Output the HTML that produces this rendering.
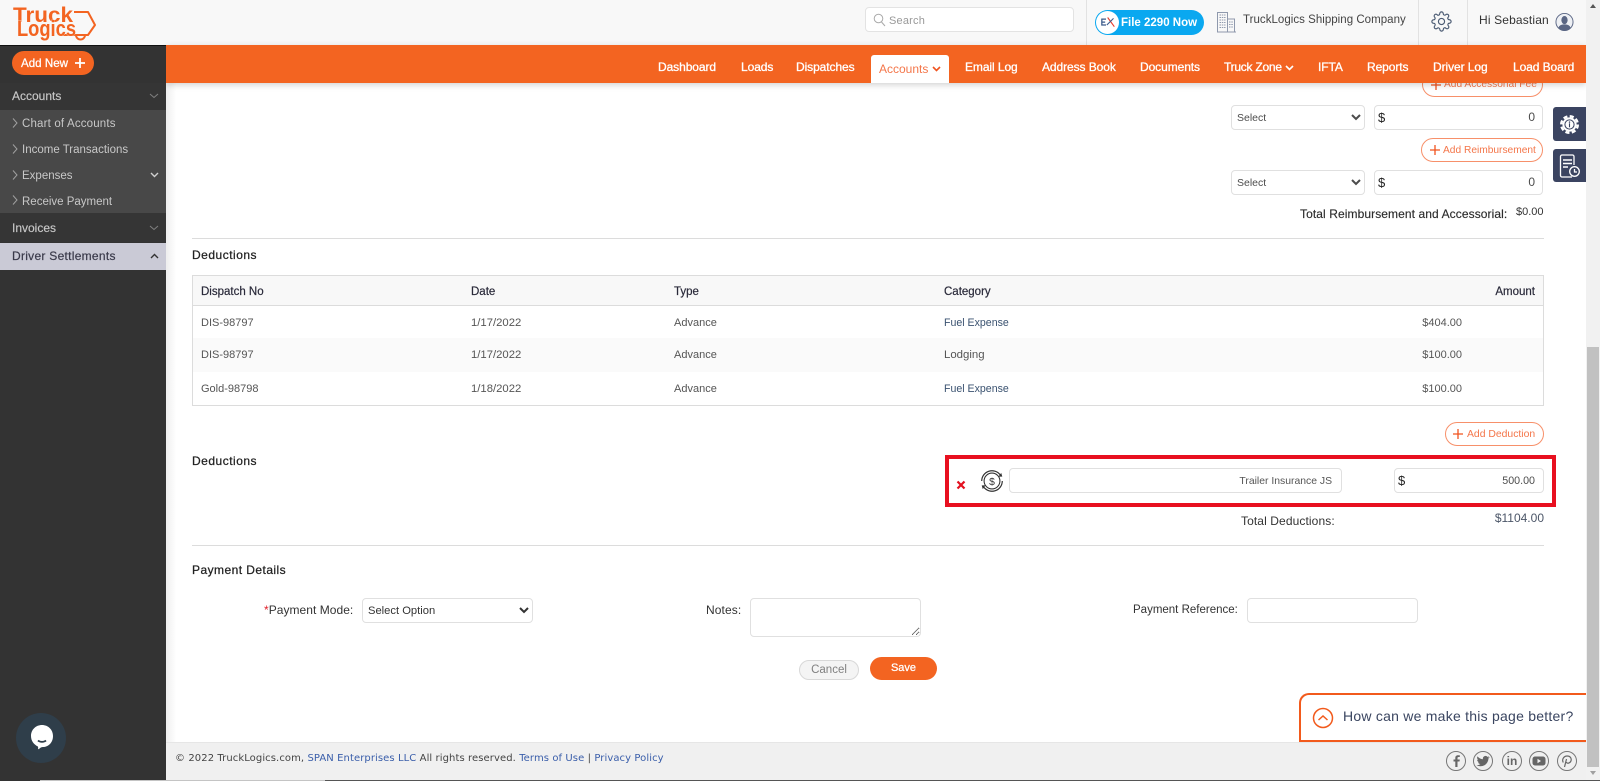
<!DOCTYPE html>
<html lang="en"><head><meta charset="utf-8"><title>TruckLogics</title>
<style>
html,body{margin:0;padding:0;width:1600px;height:781px;overflow:hidden;background:#fff}
body{position:relative;font:12px "Liberation Sans",sans-serif;color:#4c4c4c}
div,span,a,select,input,textarea,svg,button{position:absolute;box-sizing:border-box}
.t{white-space:nowrap;line-height:14px;height:14px}
.nav{color:#fff;-webkit-text-stroke:.3px #fff;top:60px;letter-spacing:-.08px}
.side{color:#c8c8c8;left:22px;font-size:11.5px}
.sh{color:#c8c8c8;left:12px;-webkit-text-stroke:.15px #c8c8c8}
.hd{color:#222;left:192px;-webkit-text-stroke:.25px #222;letter-spacing:.5px}
.th{color:#2a2a3a;top:285px;-webkit-text-stroke:.2px #2a2a3a;font-size:11.5px}
.td{color:#555;font-size:11px}
.fuel{color:#3a5270;font-size:10.6px}
.fld{background:#fff;border:1px solid #e0e0e0;border-radius:4px;font:12px "Liberation Sans",sans-serif;color:#4c4c4c;margin:0}
.sel{font-size:10.5px;padding-left:1px}
.pill{background:#fff;border:1px solid #f7906a;border-radius:13px}
.pt{color:#f4764a;font-size:10.2px}
.r{text-align:right}
a{color:#3a5eaa;text-decoration:none;position:static}
</style></head><body>

<!-- main shadows -->
<div style="left:166px;top:83px;width:10px;height:660px;background:linear-gradient(90deg,#eee,#fff)"></div>

<!-- right side form (top) -->
<div class="pill" style="left:1422px;top:72px;width:121px;height:25px"></div>
<div class="t pt" style="left:1444px;top:78px">Add Accessorial Fee</div>
<svg style="left:1431px;top:80px" width="10" height="10" viewBox="0 0 10 10"><path d="M5 0v10M0 5h10" stroke="#f0531f" stroke-width="1.300"/></svg>

<select class="fld sel" style="left:1231px;top:105px;width:134px;height:25px"><option>Select</option></select>
<div class="fld" style="left:1374px;top:105px;width:169px;height:25px"></div>
<div class="t" style="left:1378px;top:111px;color:#222;font-size:13px">$</div>
<div class="t r" style="right:65px;top:110px;">0</div>

<div class="pill" style="left:1421px;top:138px;width:122px;height:24px"></div>
<div class="t pt" style="left:1443px;top:144px">Add Reimbursement</div>
<svg style="left:1430px;top:145px" width="10" height="10" viewBox="0 0 10 10"><path d="M5 0v10M0 5h10" stroke="#f0531f" stroke-width="1.300"/></svg>

<select class="fld sel" style="left:1231px;top:170px;width:134px;height:25px"><option>Select</option></select>
<div class="fld" style="left:1374px;top:170px;width:169px;height:25px"></div>
<div class="t" style="left:1378px;top:176px;color:#222;font-size:13px">$</div>
<div class="t r" style="right:65px;top:175px;">0</div>

<div class="t" style="left:1300px;top:207px;color:#2c2c2c;letter-spacing:.09px;-webkit-text-stroke:.15px #2c2c2c">Total Reimbursement and Accessorial:</div>
<div class="t" style="left:1516px;top:205px;font-size:11px;color:#333">$0.00</div>

<div style="left:192px;top:238px;width:1352px;height:1px;background:#dcdcdc"></div>
<div class="t hd" style="top:248px">Deductions</div>

<!-- table -->
<div style="left:192px;top:275px;width:1352px;height:131px;border:1px solid #dcdcdc;background:#fff"></div>
<div style="left:193px;top:276px;width:1350px;height:30px;background:#f8f8f8;border-bottom:1px solid #dcdcdc"></div>
<div style="left:193px;top:338px;width:1350px;height:34px;background:#fafafa"></div>
<div class="t th" style="left:201px">Dispatch No</div>
<div class="t th" style="left:471px">Date</div>
<div class="t th" style="left:674px">Type</div>
<div class="t th" style="left:944px">Category</div>
<div class="t th r" style="right:65px">Amount</div>

<div class="t td" style="left:201px;top:316px">DIS-98797</div>
<div class="t td" style="left:471px;top:316px;font-size:11.3px">1/17/2022</div>
<div class="t td" style="left:674px;top:316px">Advance</div>
<div class="t td fuel" style="left:944px;top:316px">Fuel Expense</div>
<div class="t td r" style="right:138px;top:316px">$404.00</div>

<div class="t td" style="left:201px;top:348px">DIS-98797</div>
<div class="t td" style="left:471px;top:348px;font-size:11.3px">1/17/2022</div>
<div class="t td" style="left:674px;top:348px">Advance</div>
<div class="t td" style="left:944px;top:348px;font-size:11.4px">Lodging</div>
<div class="t td r" style="right:138px;top:348px">$100.00</div>

<div class="t td" style="left:201px;top:382px">Gold-98798</div>
<div class="t td" style="left:471px;top:382px;font-size:11.3px">1/18/2022</div>
<div class="t td" style="left:674px;top:382px">Advance</div>
<div class="t td fuel" style="left:944px;top:382px">Fuel Expense</div>
<div class="t td r" style="right:138px;top:382px">$100.00</div>

<div class="pill" style="left:1445px;top:422px;width:99px;height:24px"></div>
<div class="t pt" style="left:1467px;top:428px;font-size:10.4px">Add Deduction</div>
<svg style="left:1453px;top:429px" width="10" height="10" viewBox="0 0 10 10"><path d="M5 0v10M0 5h10" stroke="#f0531f" stroke-width="1.300"/></svg>

<div class="t hd" style="top:454px">Deductions</div>

<!-- highlighted row -->
<div style="left:945px;top:455px;width:611px;height:52px;border:4px solid #e81020"></div>
<svg style="left:956px;top:480px" width="10" height="10" viewBox="0 0 10 10"><path d="M1.500 1.500l7 7M8.500 1.500l-7 7" stroke="#e3101f" stroke-width="2.200" fill="none"/></svg>
<svg style="left:979px;top:468px" width="26" height="26" viewBox="0 0 24 24" fill="none" stroke="#333">
<circle cx="12" cy="12" r="7.300" stroke-width="1"/>
<path d="M2.500 12a9.500 9.500 0 0 1 17-5.800M21.500 12a9.500 9.500 0 0 1-17 5.800" stroke-width="1.100"/>
<path d="M18 8h3.500l-1-3.500zM6 16H2.500l1 3.500z" fill="#333" stroke="none"/>
<text x="12" y="15.500" font-size="9.500" text-anchor="middle" fill="#333" stroke="none" font-family="Liberation Sans">$</text></svg>
<div class="fld" style="left:1009px;top:468px;width:333px;height:25px;color:#555;text-align:right;line-height:25px;padding-right:9px;font-size:10.4px">Trailer Insurance JS</div>
<div class="fld" style="left:1394px;top:468px;width:150px;height:25px;text-align:right;line-height:24px;padding-right:8px;font-size:10.7px">500.00</div>
<div class="t" style="left:1398px;top:474px;color:#222;font-size:13px">$</div>

<div class="t" style="left:1241px;top:514px;color:#333;letter-spacing:.1px">Total Deductions:</div>
<div class="t r" style="right:56px;top:511px;color:#4c5668">$1104.00</div>

<div style="left:192px;top:545px;width:1352px;height:1px;background:#dcdcdc"></div>
<div class="t hd" style="top:563px;letter-spacing:.45px">Payment Details</div>

<!-- payment -->
<div class="t" style="left:264px;top:603px;color:#333;letter-spacing:.04px"><span style="position:static;color:#e0202a">*</span>Payment Mode:</div>
<select class="fld" style="left:362px;top:598px;width:171px;height:25px;padding-left:1px;color:#333;font-size:11.2px"><option>Select Option</option></select>
<div class="t" style="left:706px;top:603px;color:#333;letter-spacing:.1px">Notes:</div>
<textarea class="fld" style="left:750px;top:598px;width:171px;height:39px"></textarea>
<div class="t" style="left:1133px;top:603px;color:#333;font-size:11.5px">Payment Reference:</div>
<div class="fld" style="left:1247px;top:598px;width:171px;height:25px"></div>

<div style="left:799px;top:660px;width:60px;height:20px;border:1px solid #d8d8d8;border-radius:10px;background:#f4f4f4;color:#808080;text-align:center;line-height:19px;font-size:11.5px">Cancel</div>
<div style="left:870px;top:657px;width:67px;height:23px;background:#f36421;border-radius:12px;color:#fff;text-align:center;line-height:23px;font-size:11px;-webkit-text-stroke:.25px #fff">Save</div>

<!-- footer -->
<div style="left:166px;top:742px;width:1420px;height:39px;background:#f0f0f0;border-top:1px solid #e6e6e6"></div>
<div class="t" style="left:175px;top:752px;color:#444;font-family:'DejaVu Sans',sans-serif;font-size:10px;letter-spacing:.085px">© 2022 TruckLogics.com, <a>SPAN Enterprises LLC</a> All rights reserved. <a>Terms of Use</a> | <a>Privacy Policy</a></div>
<svg style="left:1445px;top:750px" width="134" height="22" viewBox="0 0 134 22" fill="none" stroke="#777">
<circle cx="11" cy="11" r="9.500"/><circle cx="38" cy="11" r="9.500"/><circle cx="67" cy="11" r="9.500"/><circle cx="94" cy="11" r="9.500"/><circle cx="122" cy="11" r="9.500"/>
<path d="M12.500 17v-5.500h2l.3-2h-2.300V8.200c0-.8.3-1.200 1.100-1.200h1.200V5.200h-1.800c-1.900 0-2.700 1.100-2.700 2.800v1.500H8.500v2h1.800V17z" fill="#666" stroke="none"/>
<path d="M44.500 7.300c-.5.200-1 .4-1.500.4.500-.3 1-.8 1.200-1.400-.5.300-1.100.5-1.700.6a2.600 2.600 0 0 0-4.500 2.400c-2.200-.1-4.200-1.200-5.500-2.900-.7 1.200-.4 2.700.8 3.500-.4 0-.8-.1-1.200-.3 0 1.300.9 2.400 2.100 2.600-.4.100-.8.100-1.200 0 .3 1.100 1.300 1.800 2.400 1.800-1.100.9-2.500 1.300-3.900 1.100 3.900 2.500 11.300 1.100 12-6.700.5-.3.900-.7 1.300-1.100z" fill="#666" stroke="none"/>
<text x="67" y="15" font-size="12" font-weight="700" text-anchor="middle" fill="#666" stroke="none" font-family="Liberation Sans">in</text>
<rect x="87.500" y="6.500" width="13" height="9" rx="2.500" fill="#666" stroke="none"/><path d="M92.500 8.800v4.400l3.500-2.200z" fill="#f0f0f0" stroke="none"/>
<path d="M119.500 17l2-8M118.300 12.500c-1.700-2.800.300-6.500 3.900-6.500 3 0 4.400 2.200 3.900 4.500-.5 2.300-3.400 3.700-4.900 1.800" stroke="#666" stroke-width="1.200"/>
</svg>

<!-- feedback -->
<div style="left:1299px;top:693px;width:288px;height:49px;background:#fff;border:2px solid #f25a1c;border-right:0;border-radius:10px 0 0 0"></div>
<svg style="left:1312px;top:707px" width="22" height="22" viewBox="0 0 22 22" fill="none" stroke="#f25a1c"><circle cx="11" cy="11" r="9.500" stroke-width="1.500"/><path d="M6.500 13l4.500-4 4.500 4" stroke-width="1.500"/></svg>
<div class="t" style="left:1343px;top:709px;font-size:14px;color:#3a4560;letter-spacing:.24px">How can we make this page better?</div>

<!-- floating buttons -->
<div style="left:1553px;top:107px;width:33px;height:34px;background:#3b4461;border-radius:3px 0 0 3px"></div>
<svg style="left:1560px;top:115px" width="19" height="19" viewBox="0 0 24 24"><circle cx="12" cy="12" r="10.500" fill="none" stroke="#fff" stroke-width="3" stroke-dasharray="5.200 3.040"/><circle cx="12" cy="12" r="9" fill="#fff"/><circle cx="12" cy="12" r="5.800" fill="#fff" stroke="#3b4461" stroke-width="1.300"/><circle cx="12" cy="9" r=".9" fill="#3b4461"/><path d="M12 10.500v5" stroke="#3b4461" stroke-width="1.400"/></svg>
<div style="left:1553px;top:149px;width:33px;height:33px;background:#3b4461;border-radius:3px 0 0 3px"></div>
<svg style="left:1559px;top:153px" width="22" height="26" viewBox="0 0 22 26" fill="none" stroke="#fff" stroke-width="1.300"><path d="M13 24H3a1.500 1.500 0 0 1-1.500-1.500v-19A1.500 1.500 0 0 1 3 2h10.500A1.500 1.500 0 0 1 15 3.500V12"/><path d="M4 7h9M4 10.500h9M4 14h5" stroke-width="1.500"/><circle cx="15.500" cy="18.500" r="4.800"/><path d="M15.500 16v3h2.500"/></svg>

<!-- top bar -->
<div style="left:0;top:0;width:1586px;height:45px;background:#f8f8f8"></div>
<svg style="left:10px;top:2px" width="90" height="42" viewBox="10 2 90 42">
<g fill="none" stroke="#f36421" stroke-width="2" stroke-linejoin="round"><path d="M74 12h14l7 13-7 10H63M76 35a4.500 4.500 0 0 0 9 0"/></g>
<text x="13" y="22" font-family="Liberation Sans" font-size="21" font-weight="700" fill="#f36421" textLength="60" lengthAdjust="spacingAndGlyphs">Truck</text>
<text x="17" y="36" font-family="Liberation Sans" font-size="22" font-weight="700" fill="#f36421" stroke="#f8f8f8" stroke-width=".6" paint-order="stroke" textLength="59" lengthAdjust="spacingAndGlyphs">Logics</text>
</svg>

<div style="left:865px;top:7px;width:209px;height:25px;background:#fff;border:1px solid #e3e3e3;border-radius:4px"></div>
<svg style="left:873px;top:13px" width="13" height="14" viewBox="0 0 13 14" fill="none" stroke="#aaa"><circle cx="5.500" cy="5.500" r="4.300"/><path d="M8.500 9l3.500 4"/></svg>
<div class="t" style="left:889px;top:14px;color:#999;font-size:11px;letter-spacing:.2px">Search</div>

<div style="left:1086px;top:0;width:1px;height:45px;background:#e2e2e2"></div>
<div style="left:1418px;top:0;width:1px;height:45px;background:#e2e2e2"></div>
<div style="left:1467px;top:0;width:1px;height:45px;background:#e2e2e2"></div>

<div style="left:1095px;top:10px;width:109px;height:25px;background:#0aa8f0;border-radius:13px"></div>
<div style="left:1096px;top:11px;width:23px;height:23px;background:#fff;border-radius:50%"></div>
<svg style="left:1100px;top:15px" width="17" height="15" viewBox="0 0 20 18" fill="none"><path d="M7 5H2v7h5M2 8.500h4" stroke="#3a5a8a" stroke-width="1.500"/><path d="M9 3l8 11" stroke="#e53a2a" stroke-width="1.300"/><path d="M16 4L8 12" stroke="#3a5a8a" stroke-width="1.300"/></svg>
<div class="t" style="left:1121px;top:16px;color:#fff;font-size:11.5px;font-weight:700">File 2290 Now</div>

<svg style="left:1216px;top:11px" width="20" height="22" viewBox="0 0 20 22" fill="none" stroke="#8f99ad"><path d="M1.500 21V1.500h10V21zM11.500 8h7v13h-7M3 21h17"/><path d="M3.500 4h6M3.500 6.500h6M3.500 9h6M3.500 11.500h6M3.500 14h6M3.500 16.500h6M13 11h4M13 13.500h4M13 16h4" stroke-dasharray="1.500 .8"/></svg>
<div class="t" style="left:1243px;top:13px;color:#444;font-size:11.5px;letter-spacing:.03px">TruckLogics Shipping Company</div>
<svg style="left:1431px;top:11px" width="21" height="21" viewBox="0 0 24 24" fill="none" stroke="#4a5a72" stroke-width="1.300"><circle cx="12" cy="12" r="3.500"/><path d="M19.400 15a1.650 1.650 0 0 0 .33 1.820l.06.06a2 2 0 0 1 0 2.830 2 2 0 0 1-2.830 0l-.06-.06a1.650 1.650 0 0 0-1.820-.33 1.650 1.650 0 0 0-1 1.510V21a2 2 0 0 1-2 2 2 2 0 0 1-2-2v-.09A1.650 1.650 0 0 0 9 19.400a1.650 1.650 0 0 0-1.820.33l-.06.06a2 2 0 0 1-2.830 0 2 2 0 0 1 0-2.830l.06-.06a1.650 1.650 0 0 0 .33-1.820 1.650 1.650 0 0 0-1.510-1H3a2 2 0 0 1-2-2 2 2 0 0 1 2-2h.09A1.650 1.650 0 0 0 4.600 9a1.650 1.650 0 0 0-.33-1.820l-.06-.06a2 2 0 0 1 0-2.830 2 2 0 0 1 2.830 0l.06.06a1.650 1.650 0 0 0 1.820.33H9a1.650 1.650 0 0 0 1-1.510V3a2 2 0 0 1 2-2 2 2 0 0 1 2 2v.09a1.650 1.650 0 0 0 1 1.510 1.650 1.650 0 0 0 1.820-.33l.06-.06a2 2 0 0 1 2.830 0 2 2 0 0 1 0 2.830l-.06.06a1.650 1.650 0 0 0-.33 1.820V9a1.650 1.650 0 0 0 1.510 1H21a2 2 0 0 1 2 2 2 2 0 0 1-2 2h-.09a1.650 1.650 0 0 0-1.510 1z"/></svg>
<div class="t" style="left:1479px;top:13px;color:#333;letter-spacing:.15px">Hi Sebastian</div>
<svg style="left:1555px;top:12px" width="19" height="20" viewBox="0 0 20 20"><circle cx="10" cy="10" r="9" fill="#eef0f4" stroke="#5a6684" stroke-width="1"/><ellipse cx="10" cy="8" rx="3.300" ry="4.300" fill="#5a6684"/><path d="M3.500 16.500c1-3.500 4-4 6.500-4s5.500.5 6.500 4a9 9 0 0 1-13 0z" fill="#5a6684"/></svg>

<!-- orange nav -->
<div style="left:166px;top:45px;width:1420px;height:38px;background:#f36421;box-shadow:0 2px 6px rgba(0,0,0,.18)"></div>
<div class="t nav" style="left:658px">Dashboard</div>
<div class="t nav" style="left:741px">Loads</div>
<div class="t nav" style="left:796px">Dispatches</div>
<div style="left:871px;top:55px;width:78px;height:28px;background:#fff;border-radius:3px 3px 0 0"></div>
<div class="t" style="left:879px;top:62px;color:#f4764a">Accounts</div>
<svg style="left:932px;top:66px" width="9" height="6" viewBox="0 0 9 6" fill="none" stroke="#f0531f" stroke-width="1.600"><path d="M1 1l3.500 3.500L8 1"/></svg>
<div class="t nav" style="left:965px">Email Log</div>
<div class="t nav" style="left:1042px">Address Book</div>
<div class="t nav" style="left:1140px">Documents</div>
<div class="t nav" style="left:1224px;letter-spacing:-.25px">Truck Zone</div>
<svg style="left:1285px;top:65px" width="9" height="6" viewBox="0 0 9 6" fill="none" stroke="#fff" stroke-width="1.600"><path d="M1 1l3.500 3.500L8 1"/></svg>
<div class="t nav" style="left:1318px">IFTA</div>
<div class="t nav" style="left:1367px">Reports</div>
<div class="t nav" style="left:1433px">Driver Log</div>
<div class="t nav" style="left:1513px">Load Board</div>

<!-- sidebar -->
<div style="left:0;top:45px;width:166px;height:736px;background:#333;border-top:1px solid #111"></div>
<div style="left:12px;top:51px;width:82px;height:24px;background:#f36421;border-radius:12px"></div>
<div class="t" style="left:21px;top:57px;color:#fff;-webkit-text-stroke:.25px #fff;font-size:11.6px">Add New</div>
<svg style="left:75px;top:58px" width="10" height="10" viewBox="0 0 10 10"><path d="M5 0v10M0 5h10" stroke="#fff" stroke-width="1.800"/></svg>
<div style="left:0;top:83px;width:166px;height:27px;background:#353535"></div>
<div class="t sh" style="top:89px">Accounts</div>
<div style="left:0;top:110px;width:166px;height:103px;background:#484848"></div>
<div class="t side" style="top:117px;letter-spacing:.17px">Chart of Accounts</div>
<div class="t side" style="top:143px">Income Transactions</div>
<div class="t side" style="top:169px">Expenses</div>
<div class="t side" style="top:195px">Receive Payment</div>
<div style="left:0;top:213px;width:166px;height:29px;background:#353535"></div>
<div class="t sh" style="top:221px">Invoices</div>
<div style="left:0;top:243px;width:166px;height:27px;background:#cacad6"></div>
<div class="t" style="left:12px;top:249px;color:#3a3a4a;letter-spacing:.28px;-webkit-text-stroke:.2px #3a3a4a">Driver Settlements</div>
<svg style="left:0;top:83px" width="166" height="190" viewBox="0 83 166 190" fill="none" stroke="#a0a0a0">
<path d="M150 94l4 3.500 4-3.500M150 226l4 3.500 4-3.500" stroke="#808080"/>
<path d="M151 173l3.500 3.500 3.500-3.500" stroke="#d0d0d0" stroke-width="1.400"/>
<path d="M151 258l3.500-3.500 3.500 3.500" stroke="#333" stroke-width="1.400"/>
<path d="M13 118.500l4 4.500-4 4.500M13 144.500l4 4.500-4 4.500M13 170.500l4 4.500-4 4.500M13 195.500l4 4.500-4 4.500"/>
</svg>
<!-- chat -->
<div style="left:16px;top:713px;width:50px;height:50px;background:#2f3e4a;border-radius:50%"></div>
<svg style="left:29px;top:724px" width="26" height="28" viewBox="0 0 26 28"><path d="M13 1c6 0 11 4.500 11 11 0 7-5 11-10 11-1.500 0-2.700.6-4 2-.5.500-1 .2-.9-.6.100-1 .1-1.600-.4-2C5 20.500 2 17 2 12 2 5.500 7 1 13 1z" fill="#fff"/><path d="M9 16.500c2 1.800 6 1.800 8 0" stroke="#2f3e4a" stroke-width="1.800" fill="none"/></svg>

<!-- scrollbar -->
<div style="left:1586px;top:0;width:14px;height:781px;background:#f1f1f1"></div>
<div style="left:1587px;top:347px;width:12px;height:420px;background:#c1c1c1"></div>
<svg style="left:1586px;top:0" width="14" height="781" viewBox="0 0 14 781"><path d="M4 8l3-4 3 4z" fill="#555"/><path d="M4 771h6l-3 4z" fill="#a0a0a0"/></svg>
<div style="left:40px;top:780px;width:285px;height:1px;background:#c4c4c4"></div>
<div style="left:325px;top:780px;width:1275px;height:1px;background:#555"></div>
</body></html>
